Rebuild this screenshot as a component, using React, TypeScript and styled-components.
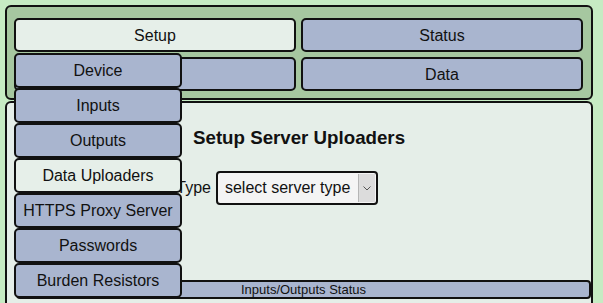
import styled, { createGlobalStyle } from 'styled-components';

const GlobalStyle = createGlobalStyle`
  html, body {
    margin: 0;
    padding: 0;
    background: #c6ebc3;
    font-family: 'Liberation Sans', Arial, sans-serif;
    color: #111;
  }
`;

const menuItems = ['Device', 'Inputs', 'Outputs', 'Data Uploaders', 'HTTPS Proxy Server', 'Passwords', 'Burden Resistors'];
const activeItem = 'Data Uploaders';

const App = () => {
  return (
    <Page>
      <GlobalStyle />
      <NavPanel>
        <NavCell>
          <NavButton $active>Setup</NavButton>
          <Dropdown>
            {menuItems.map((item) => (
              <MenuItem key={item} $active={item === activeItem}>
                {item}
              </MenuItem>
            ))}
          </Dropdown>
        </NavCell>
        <NavCell>
          <NavButton>Status</NavButton>
        </NavCell>
        <NavCell>
          <NavButton>Tools</NavButton>
        </NavCell>
        <NavCell>
          <NavButton>Data</NavButton>
        </NavCell>
      </NavPanel>

      <ContentPanel>
        <Heading>Setup Server Uploaders</Heading>
        <FormRow>
          <Label>Server Type</Label>
          <SelectBox>
            <SelectText>select server type</SelectText>
            <ArrowBox>
              <svg width="8" height="5" viewBox="0 0 8 5">
                <path d="M0.5 0.5 L4 4 L7.5 0.5" fill="none" stroke="#555" strokeWidth="1" />
              </svg>
            </ArrowBox>
          </SelectBox>
        </FormRow>
        <StatusBar>Inputs/Outputs Status</StatusBar>
      </ContentPanel>
    </Page>
  );
};

const Page = styled.div`
  width: 603px;
  height: 303px;
  box-sizing: border-box;
  padding: 5px 10px 0 5px;
  overflow: hidden;
  display: flex;
  flex-direction: column;
  gap: 1px;
`;

const NavPanel = styled.div`
  position: relative;
  z-index: 2;
  display: grid;
  grid-template-columns: 1fr 1fr;
  gap: 5px;
  padding: 11px 8px 7px 7px;
  background: #a6c7a0;
  border: 2px solid #111;
  border-radius: 6px;
`;

const NavCell = styled.div`
  position: relative;
`;

const NavButton = styled.div<{ $active?: boolean }>`
  box-sizing: border-box;
  height: 34px;
  display: flex;
  align-items: center;
  justify-content: center;
  padding-top: 1px;
  font-size: 16px;
  background: ${(p) => (p.$active ? '#e6efe9' : '#a9b5cf')};
  border: 2px solid #111;
  border-radius: 5px;
`;

const Dropdown = styled.div`
  position: absolute;
  top: calc(100% + 1px);
  left: 0;
  width: 168px;
  display: flex;
  flex-direction: column;
  z-index: 5;
`;

const MenuItem = styled.div<{ $active?: boolean }>`
  box-sizing: border-box;
  height: 35px;
  display: flex;
  align-items: center;
  justify-content: center;
  font-size: 16px;
  white-space: nowrap;
  background: ${(p) => (p.$active ? '#e6efe9' : '#a9b5cf')};
  border: 2px solid #111;
  border-radius: 5px;
`;

const ContentPanel = styled.div`
  flex: 1;
  display: flex;
  flex-direction: column;
  padding: 0 0 4px 0;
  background: #e5eee8;
  border: 2px solid #111;
  border-bottom: none;
  border-radius: 6px 6px 0 0;
`;

const Heading = styled.h3`
  margin: 24px 0 0 186px;
  font-size: 18.72px;
  font-weight: bold;
  line-height: 22px;
`;

const FormRow = styled.div`
  display: flex;
  align-items: center;
  gap: 5px;
  margin: 22px 0 0 118px;
`;

const Label = styled.span`
  font-size: 16px;
`;

const SelectBox = styled.div`
  box-sizing: border-box;
  width: 162px;
  height: 34px;
  display: flex;
  align-items: stretch;
  background: #f4f4f4;
  border: 2px solid #111;
  border-radius: 4px;
  padding: 1px 1px 1px 0;
`;

const SelectText = styled.span`
  flex: 1;
  display: flex;
  align-items: center;
  padding-left: 7px;
  font-size: 16px;
`;

const ArrowBox = styled.span`
  width: 16px;
  display: flex;
  align-items: center;
  justify-content: center;
  background: #dcdcdc;
  border-left: 1px solid #b5b5b5;
`;

const StatusBar = styled.div`
  box-sizing: border-box;
  height: 19px;
  margin: auto 0 0 9px;
  display: flex;
  align-items: center;
  justify-content: center;
  font-size: 13px;
  background: #a9b5cf;
  border: 2px solid #111;
  border-radius: 4px;
`;

export default App;
